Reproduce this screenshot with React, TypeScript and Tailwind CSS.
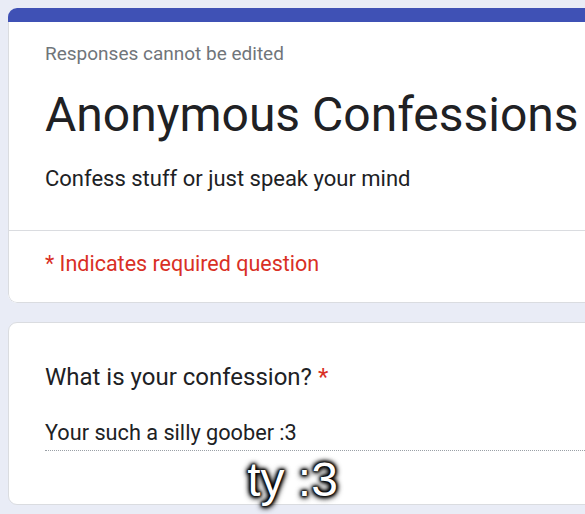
import React from "react";

export default function App() {
  return (
    <div
      className="relative w-[585px] h-[514px] overflow-hidden bg-[#e9ecf6]"
      style={{ fontFamily: "Roboto, 'Noto Sans', sans-serif" }}
    >
      <div className="flex flex-col gap-[19px] pl-[8px] pt-[8px]">
        {/* Header card */}
        <div className="w-[640px] shrink-0 rounded-[9px] overflow-hidden bg-white">
          <div className="h-[14px] bg-[#3f51b5]" />
          <div className="border-x border-b border-[#dadce0] rounded-b-[9px]">
            <div className="pl-[36px] pt-[20px] pb-[37px] border-b border-[#dadce0]">
              <div className="text-[19px] leading-[24px] text-[#70757a]">
                Responses cannot be edited
              </div>
              <div className="mt-[21px] text-[48px] leading-[56px] text-[#202124]">
                Anonymous Confessions
              </div>
              <div className="mt-[22px] text-[22px] leading-[28px] text-[#202124]">
                Confess stuff or just speak your mind
              </div>
            </div>
            <div className="pl-[36px] pt-[19px] pb-[24px] text-[21.5px] leading-[28px] text-[#d93025]">
              * Indicates required question
            </div>
          </div>
        </div>

        {/* Question card */}
        <div className="w-[640px] shrink-0 h-[183px] rounded-[9px] bg-white border border-[#dadce0] pl-[36px] pt-[38px]">
          <div className="text-[24px] leading-[32px] text-[#202124]">
            What is your confession? <span className="text-[#d93025]">*</span>
          </div>
          <div className="mt-[26px] border-b border-dotted border-[#9aa0a6] pb-[3px] text-[21.7px] leading-[28px] text-[#202124]">
            Your such a silly goober :3
          </div>
        </div>
      </div>

      {/* Meme caption overlay */}
      <div
        className="absolute left-0 right-0 top-[456px] text-center text-[48px] leading-[48px] text-white [text-shadow:0_0_1px_#000,0_0_2px_#000,0_0_3px_#000,0_0_4px_#000,0_0_5px_#000,0_0_6px_#000,0_1px_7px_#000]"
        style={{ fontFamily: "'Liberation Sans', Arial, sans-serif" }}
      >
        ty :3
      </div>
    </div>
  );
}
